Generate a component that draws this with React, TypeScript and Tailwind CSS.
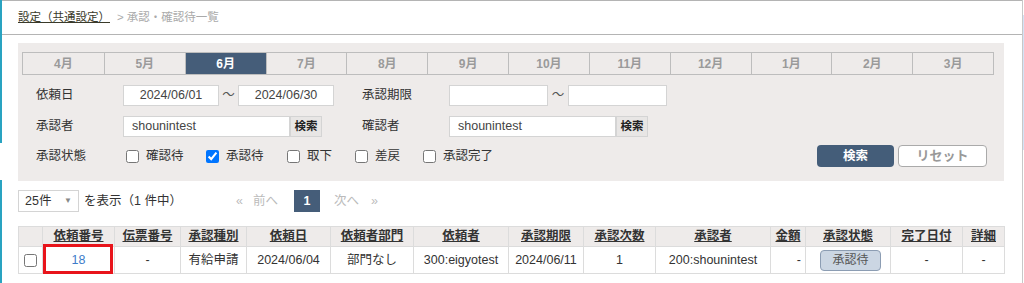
import React from 'react';

const months = ['4月', '5月', '6月', '7月', '8月', '9月', '10月', '11月', '12月', '1月', '2月', '3月'];

const columns = [
  { label: '', width: 24 },
  { label: '依頼番号', width: 72 },
  { label: '伝票番号', width: 66 },
  { label: '承認種別', width: 66 },
  { label: '依頼日', width: 84 },
  { label: '依頼者部門', width: 83 },
  { label: '依頼者', width: 95 },
  { label: '承認期限', width: 75 },
  { label: '承認次数', width: 72 },
  { label: '承認者', width: 115 },
  { label: '金額', width: 35 },
  { label: '承認状態', width: 85 },
  { label: '完了日付', width: 72 },
  { label: '詳細', width: 42 },
];

const statuses = [
  { label: '確認待', width: 'w-[80px]', checked: false },
  { label: '承認待', width: 'w-[81px]', checked: true },
  { label: '取下', width: 'w-[68px]', checked: false },
  { label: '差戻', width: 'w-[68px]', checked: false },
  { label: '承認完了', width: 'w-[80px]', checked: false },
];

const TextBox: React.FC<{ value?: string; className?: string; center?: boolean }> = ({
  value = '',
  className = '',
  center,
}) => (
  <div
    className={`h-[21px] bg-white border border-[#d4d4d4] flex items-center ${
      center ? 'justify-center' : 'pl-[8px]'
    } text-[#444] ${className}`}
  >
    {value}
  </div>
);

const SmallSearch: React.FC = () => (
  <div className="w-[32px] h-[21px] bg-[#e8e6e5] border border-[#d4d4d4] flex items-center justify-center text-[11.5px] font-bold text-[#222]">
    検索
  </div>
);

const App: React.FC = () => {
  return (
    <div className="w-[1024px] h-[283px] flex overflow-hidden bg-white text-[12.5px] text-[#333] font-['Liberation_Sans','Noto_Sans_CJK_JP',sans-serif]">
      {/* left accent line */}
      <div className="w-[2px] shrink-0 flex flex-col">
        <div className="h-[143px] bg-[#29a3c1]" />
        <div className="h-[37px]" />
        <div className="flex-1 bg-[#29a3c1]" />
      </div>

      <div className="w-[1020px] shrink-0 flex flex-col border-t border-[#b4b4b4]">
        {/* breadcrumb */}
        <div className="h-[34px] shrink-0 border-b border-[#b4b4b4] flex items-center pl-[16px] text-[11.5px]">
          <span className="underline text-[#3a3a2a]">設定（共通設定）</span>
          <span className="ml-[7px] text-[#aaa]">&gt;</span>
          <span className="ml-[3px] text-[#aaa]">承認・確認待一覧</span>
        </div>

        <div className="pl-[16px]">
          {/* filter panel */}
          <div className="mt-[8px] w-[986px] bg-[#eeebea] pt-[9px] pb-[14px] px-[4px]">
            <div className="grid grid-cols-12 w-[972px] h-[23px] border border-[#bdbdbd]">
              {months.map((m, i) => (
                <div
                  key={m}
                  className={`flex items-center justify-center font-bold text-[12px] ${
                    i > 0 ? 'border-l border-[#bdbdbd]' : ''
                  } ${m === '6月' ? 'bg-[#455d79] text-white' : 'text-[#9a9a9a]'}`}
                >
                  {m}
                </div>
              ))}
            </div>

            <div className="pl-[14px]">
              <div className="mt-[10px] h-[21px] flex items-center">
                <div className="w-[87px]">依頼日</div>
                <TextBox value="2024/06/01" center className="w-[96px]" />
                <div className="w-[19px] text-center text-[#555]">～</div>
                <TextBox value="2024/06/30" center className="w-[96px]" />
                <div className="w-[87px] ml-[28px]">承認期限</div>
                <TextBox className="w-[99px]" />
                <div className="w-[20px] text-center text-[#555]">～</div>
                <TextBox className="w-[99px]" />
              </div>

              <div className="mt-[10px] h-[21px] flex items-center">
                <div className="w-[87px]">承認者</div>
                <TextBox value="shounintest" className="w-[167px]" />
                <SmallSearch />
                <div className="w-[87px] ml-[40px]">確認者</div>
                <TextBox value="shounintest" className="w-[167px]" />
                <SmallSearch />
              </div>

              <div className="mt-[8px] h-[22px] flex items-center">
                <div className="w-[90px]">承認状態</div>
                {statuses.map((s) => (
                  <label key={s.label} className={`${s.width} flex items-center`}>
                    <input
                      type="checkbox"
                      defaultChecked={s.checked}
                      className="w-[13px] h-[13px] m-0 mr-[7px]"
                    />
                    <span>{s.label}</span>
                  </label>
                ))}
                <div className="ml-auto mr-[13px] flex gap-[4px]">
                  <button className="w-[77px] h-[22px] rounded-[4px] bg-[#445d79] text-white font-bold">
                    検索
                  </button>
                  <button className="w-[89px] h-[22px] rounded-[4px] bg-white border border-[#aaa] text-[#999] font-bold text-[13px]">
                    リセット
                  </button>
                </div>
              </div>
            </div>
          </div>

          {/* paging */}
          <div className="mt-[9px] h-[22px] flex items-center">
            <div className="w-[218px] flex items-center">
              <div className="w-[61px] h-[22px] border border-[#d4d4d4] bg-white flex items-center pl-[6px] pr-[6px]">
                <span>25件</span>
                <span className="ml-auto text-[8px] text-[#888]">▼</span>
              </div>
              <span className="ml-[5px]">を表示（1 件中）</span>
            </div>
            <span className="text-[#bbb]">«</span>
            <span className="ml-[10px] text-[#bbb]">前へ</span>
            <div className="ml-[16px] w-[26px] h-[22px] bg-[#455d79] text-white font-bold flex items-center justify-center">
              1
            </div>
            <span className="ml-[14px] text-[#bbb]">次へ</span>
            <span className="ml-[12px] text-[#bbb]">»</span>
          </div>

          {/* table */}
          <table className="mt-[14px] w-[986px] table-fixed border-collapse">
            <colgroup>
              {columns.map((c, i) => (
                <col key={i} style={{ width: c.width }} />
              ))}
            </colgroup>
            <thead>
              <tr className="h-[20px] bg-[#eeebea]">
                {columns.map((c, i) => (
                  <th key={i} className="border border-[#dcdcdc] p-0 font-bold text-[12.5px] text-[#333]">
                    <span className="underline">{c.label}</span>
                  </th>
                ))}
              </tr>
            </thead>
            <tbody>
              <tr className="h-[27px] text-center">
                <td className="border border-[#dcdcdc] p-0">
                  <input type="checkbox" className="w-[13px] h-[13px] m-0 align-middle" />
                </td>
                <td className="border border-[#dcdcdc] p-0 relative text-[#3d7cc9]">
                  18
                  <div className="absolute left-0 right-[1px] -top-[3px] -bottom-[1px] border-[3px] border-[#e8141b]" />
                </td>
                <td className="border border-[#dcdcdc] p-0">-</td>
                <td className="border border-[#dcdcdc] p-0">有給申請</td>
                <td className="border border-[#dcdcdc] p-0">2024/06/04</td>
                <td className="border border-[#dcdcdc] p-0">部門なし</td>
                <td className="border border-[#dcdcdc] p-0">300:eigyotest</td>
                <td className="border border-[#dcdcdc] p-0">2024/06/11</td>
                <td className="border border-[#dcdcdc] p-0">1</td>
                <td className="border border-[#dcdcdc] p-0">200:shounintest</td>
                <td className="border border-[#dcdcdc] p-0 text-right pr-[4px]">-</td>
                <td className="border border-[#dcdcdc] p-0">
                  <div className="mx-auto ml-[14px] w-[61px] h-[21px] rounded-[4px] bg-[#cbd6e3] border border-[#8c9db3] flex items-center justify-center text-[12px] text-[#555]">
                    承認待
                  </div>
                </td>
                <td className="border border-[#dcdcdc] p-0">-</td>
                <td className="border border-[#dcdcdc] p-0">-</td>
              </tr>
            </tbody>
          </table>
        </div>
      </div>

      {/* right edge */}
      <div className="w-px shrink-0 bg-[#c8c8c8]" />
      <div className="w-px shrink-0 flex flex-col">
        <div className="h-[15px]" />
        <div className="h-[135px] bg-[#d3e3f7]" />
      </div>
    </div>
  );
};

export default App;
